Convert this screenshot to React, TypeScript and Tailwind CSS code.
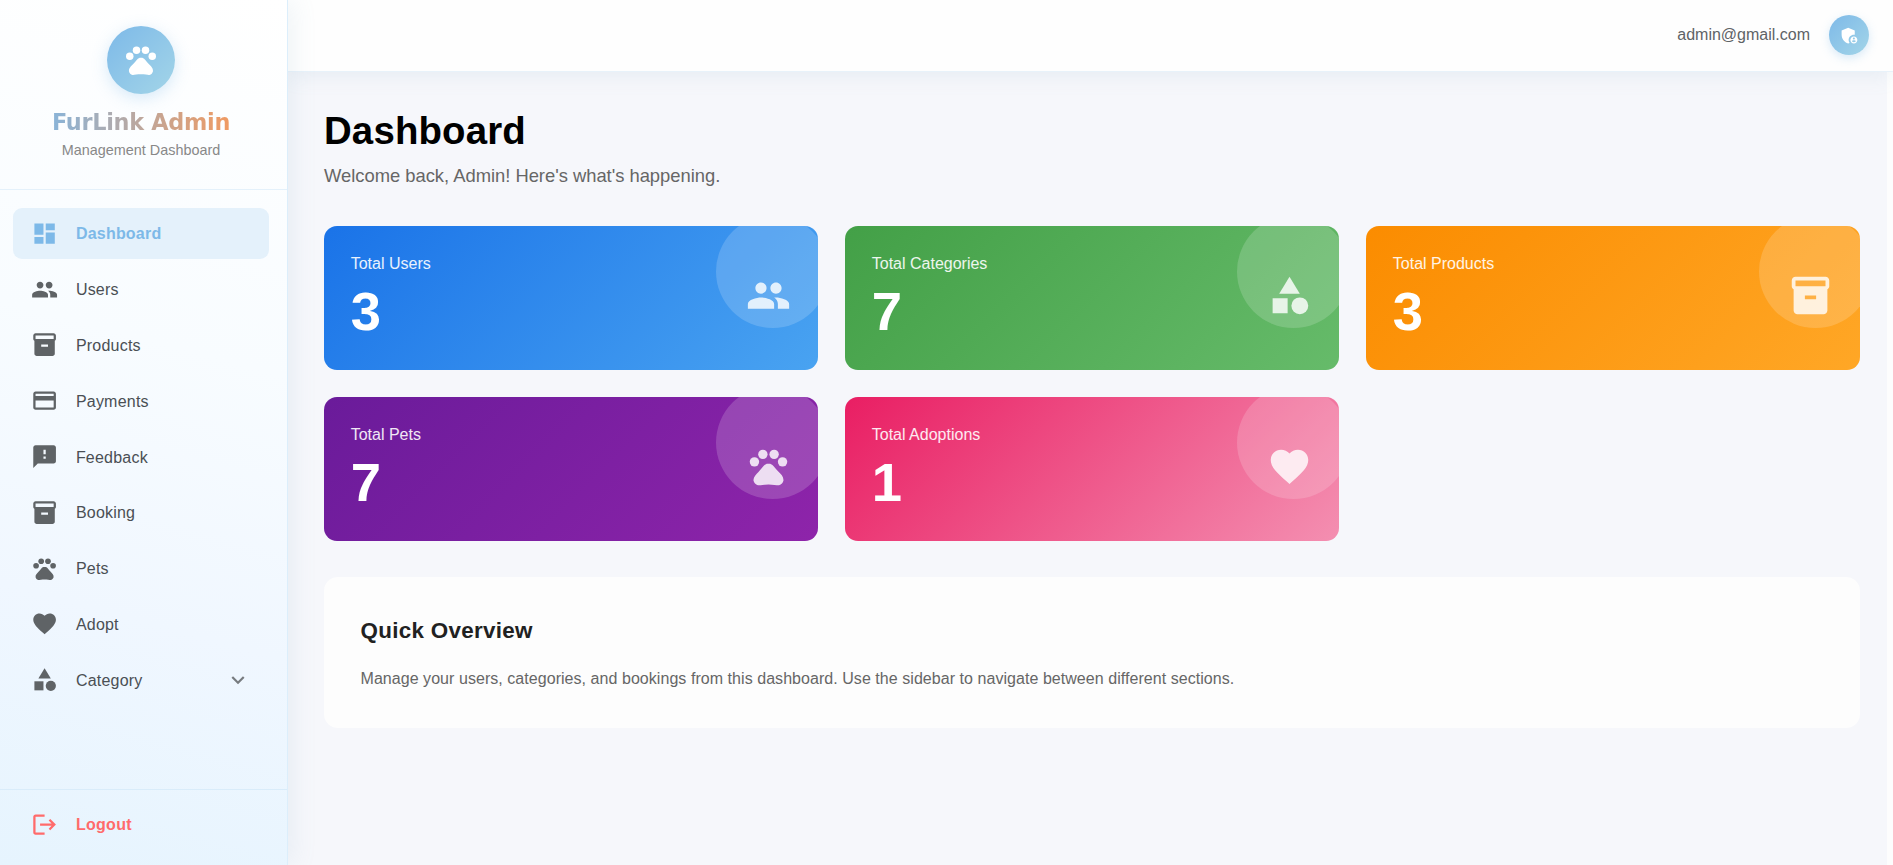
import type { IconType } from 'react-icons';
import {
  MdAdminPanelSettings,
  MdCategory,
  MdDashboard,
  MdExpandMore,
  MdFavorite,
  MdFeedback,
  MdInventory2,
  MdLogout,
  MdPayment,
  MdPeople,
  MdPets,
} from 'react-icons/md';
import clsx from 'clsx';

type NavItem = { label: string; icon: IconType; active?: boolean; expandable?: boolean };

const navItems: NavItem[] = [
  { label: 'Dashboard', icon: MdDashboard, active: true },
  { label: 'Users', icon: MdPeople },
  { label: 'Products', icon: MdInventory2 },
  { label: 'Payments', icon: MdPayment },
  { label: 'Feedback', icon: MdFeedback },
  { label: 'Booking', icon: MdInventory2 },
  { label: 'Pets', icon: MdPets },
  { label: 'Adopt', icon: MdFavorite },
  { label: 'Category', icon: MdCategory, expandable: true },
];

const stats = [
  { label: 'Total Users', value: 3, icon: MdPeople, bg: 'bg-[linear-gradient(135deg,#1a73e8,#49a3f1)]' },
  { label: 'Total Categories', value: 7, icon: MdCategory, bg: 'bg-[linear-gradient(135deg,#43a047,#66bb6a)]' },
  { label: 'Total Products', value: 3, icon: MdInventory2, bg: 'bg-[linear-gradient(135deg,#fb8c00,#ffa726)]' },
  { label: 'Total Pets', value: 7, icon: MdPets, bg: 'bg-[linear-gradient(135deg,#6a1b9a,#8e24aa)]' },
  { label: 'Total Adoptions', value: 1, icon: MdFavorite, bg: 'bg-[linear-gradient(135deg,#e91e63,#f48fb1)]' },
];

const Sidebar = () => (
  <aside className="relative z-20 flex w-[288px] shrink-0 flex-col border-r border-[#dceefb] bg-[linear-gradient(195deg,#ffffff_0%,#f8fcff_40%,#f0f7ff_70%,#e6f4fe_100%)] shadow-[4px_0_24px_rgba(125,165,190,0.12)]">
    <div className="flex h-[190px] flex-col items-center border-b border-[#e4f1fb] pt-[26px] pr-[5px]">
      <div className="flex size-[68px] items-center justify-center rounded-full bg-[linear-gradient(135deg,#7db9e8,#a3d5e8)] text-white shadow-[0_4px_16px_rgba(125,185,232,0.3)]">
        <MdPets className="size-9" />
      </div>
      <h2 className="mt-[11px] bg-[linear-gradient(90deg,#8ab4d8,#f09a62)] bg-clip-text font-['DejaVu_Sans',sans-serif] text-[22.4px] leading-[34px] font-black tracking-[-0.3px] text-transparent">
        FurLink Admin
      </h2>
      <p className="mt-px text-[14.4px] leading-[21px] text-[#888]">Management Dashboard</p>
    </div>

    <nav className="flex flex-1 flex-col gap-1 pt-[17.6px] pr-[18px] pl-[13px]">
      {navItems.map(({ label, icon: Icon, active, expandable }) => (
        <a
          key={label}
          className={clsx(
            'flex h-[51.8px] items-center rounded-[9px] px-[18px]',
            active ? 'bg-[#e4f1fb] font-bold text-[#7db9e8]' : 'text-[#4a4f54]',
          )}
        >
          <Icon className={clsx('size-[27.2px]', !active && 'text-[#5f6366]')} />
          <span className="ml-[17.7px] flex-1 pt-0.5 tracking-[0.22px]">{label}</span>
          {expandable && <MdExpandMore className="size-[26px] text-[#777b7f]" />}
        </a>
      ))}
    </nav>

    <div className="flex h-[76px] items-center border-t border-[#d9ecfa] pb-[5px] pl-[31px] font-bold text-[#ff6b6b]">
      <MdLogout className="size-[27.2px]" />
      <span className="ml-[17.7px] tracking-[0.3px]">Logout</span>
    </div>
  </aside>
);

const Header = () => (
  <header className="relative z-10 flex h-[72px] items-center justify-end border-b border-[#e8f2fa] bg-[#fefefe] pr-6 pb-px shadow-[0_4px_20px_rgba(125,165,190,0.12)]">
    <span className="mr-[19px] text-[#5f6366]">admin@gmail.com</span>
    <div className="flex size-10 items-center justify-center rounded-full bg-[linear-gradient(135deg,#7db9e8,#a3d5e8)] text-white shadow-[0_3px_10px_rgba(125,185,232,0.3)]">
      <MdAdminPanelSettings className="size-[21px]" />
    </div>
  </header>
);

export default function App() {
  return (
    <div className="flex h-[865px] overflow-hidden bg-[#fdfdfd] font-['Liberation_Sans',Arial,sans-serif] text-base">
      <Sidebar />
      <div className="flex flex-1 flex-col">
        <Header />
        <main className="mr-1.5 flex-1 bg-[#f6f7fb] pt-[34px] pr-[27px] pl-9">
          <h1 className="text-[38.4px] leading-[50px] font-bold tracking-[0.15px] text-black">Dashboard</h1>
          <p className="mt-1.5 text-[18.4px] leading-[28px] tracking-[-0.02px] text-[#666]">
            Welcome back, Admin! Here's what's happening.
          </p>

          <div className="mt-9 grid grid-cols-3 gap-[27.2px]">
            {stats.map(({ label, value, icon: Icon, bg }) => (
              <div
                key={label}
                className={clsx(
                  'relative flex h-36 items-center justify-between overflow-hidden rounded-[13px] pr-[27.2px] pb-[5px] pl-[26.7px] text-white',
                  bg,
                )}
              >
                {/* corner bubble */}
                <div className="absolute -top-[11.5px] -right-[11.5px] size-[113px] rounded-full bg-white/17" />
                <div className="pt-1">
                  <p className="leading-6 text-white/90">{label}</p>
                  <p className="mt-1 text-[54.4px] leading-[64px] font-bold">{value}</p>
                </div>
                <Icon className="relative size-[45px] text-white/82" />
              </div>
            ))}
          </div>

          <section className="mt-9 h-[151px] rounded-[14px] bg-[#fdfdfd] px-[36.5px] pt-[37px]">
            <h2 className="text-[22.4px] leading-[34px] font-bold tracking-[0.3px] text-[#212121]">Quick Overview</h2>
            <p className="mt-[18px] leading-[26px] tracking-[0.05px] text-[#666]">
              Manage your users, categories, and bookings from this dashboard. Use the sidebar to navigate between
              different sections.
            </p>
          </section>
        </main>
      </div>
    </div>
  );
}
